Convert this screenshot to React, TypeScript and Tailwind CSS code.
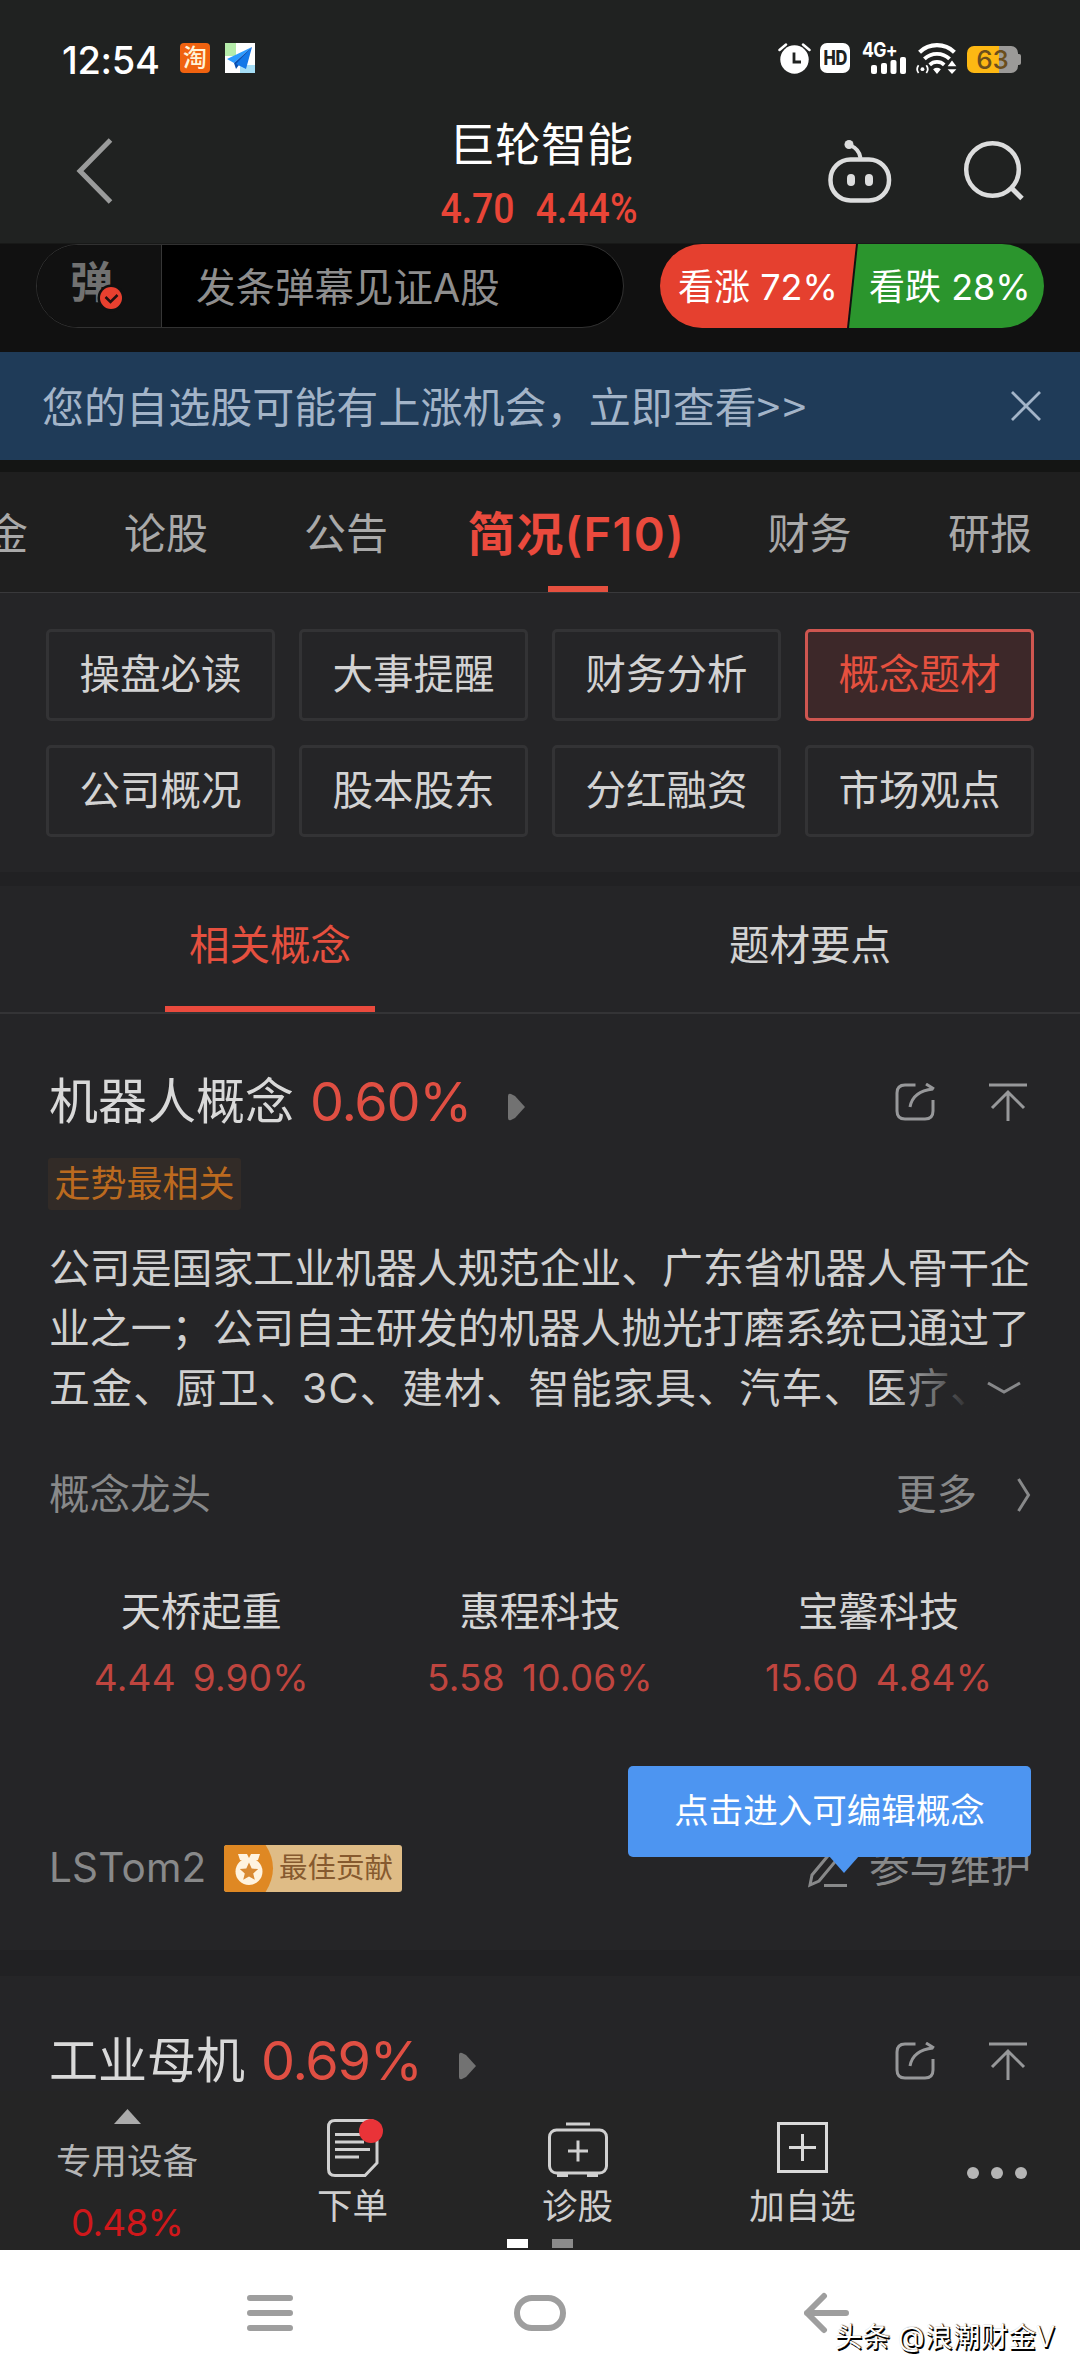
import { ReactNode } from "react";

type Tab = { label: string; width: string; active?: boolean };

const tabs: Tab[] = [
  { label: "论股", width: "w-[180px]" },
  { label: "公告", width: "w-[180px]" },
  { label: "简况(F10)", width: "w-[281px]", active: true },
  { label: "财务", width: "w-[185px]" },
  { label: "研报", width: "w-[176px]" },
];

const sections = [
  "操盘必读",
  "大事提醒",
  "财务分析",
  "概念题材",
  "公司概况",
  "股本股东",
  "分红融资",
  "市场观点",
];

const leaders = [
  { name: "天桥起重", price: "4.44", change: "9.90%" },
  { name: "惠程科技", price: "5.58", change: "10.06%" },
  { name: "宝馨科技", price: "15.60", change: "4.84%" },
];

const StatusBar = () => (
  <div className="flex h-[116px] items-center pl-[62px] pr-[59px]">
    <span className="mt-[4px] w-[118px] text-[38px] leading-[44px] font-medium tracking-[-0.3px] text-white">
      12:54
    </span>
    <span className="flex h-[30px] w-[30px] items-center justify-center rounded-[4px] bg-[#f0620f] text-[24px] font-medium text-[#fff3d8]">
      淘
    </span>
    <svg className="ml-[15px]" width="30" height="30" viewBox="0 0 30 30">
      <rect width="30" height="30" fill="#fff" />
      <rect width="11" height="13" fill="#b5ecaa" />
      <rect x="15" y="22" width="15" height="8" fill="#a5def6" />
      <path d="M27 4 2 16l7 4z" fill="#2c9bff" />
      <path d="M27 4 9 20l2 6z" fill="#0b4fb0" />
      <path d="M27 4 11 21l10 5z" fill="#1478e8" />
    </svg>
    <svg className="ml-auto" width="33" height="31" viewBox="0 0 33 31">
      <circle cx="16.5" cy="16.500" r="14.200" fill="#fff" />
      <path d="M1.500 7 8 1.500M31.500 7 25 1.500" stroke="#fff" strokeWidth="2.500" strokeLinecap="round" />
      <path d="M16 9.500v9.500h7" fill="none" stroke="#202221" strokeWidth="2.800" />
    </svg>
    <span className="ml-[9px] flex h-[30px] w-[30px] items-center justify-center rounded-[7px] bg-white text-[#202221]">
      <span className="scale-x-[0.820] text-[20px] leading-[30px] font-extrabold tracking-[-0.500px]">HD</span>
    </span>
    <div className="relative ml-[12px] h-[31px] w-[46px]">
      <span className="absolute left-0 top-0 scale-x-[0.880] origin-left text-[20px] leading-[15px] font-bold tracking-[-0.800px] text-white">
        4G+
      </span>
      <svg width="46" height="31" viewBox="0 0 46 31" fill="#fff">
        <rect x="9" y="22" width="6" height="9" rx="2" />
        <rect x="19" y="20" width="6" height="11" rx="2" />
        <rect x="28.500" y="17" width="6" height="14" rx="2" />
        <rect x="38" y="14" width="6" height="17" rx="2" />
      </svg>
    </div>
    <svg className="ml-[7px]" width="43" height="31" viewBox="0 0 43 32" fill="none" stroke="#fff">
      <path d="M4 9.500a26 26 0 0 1 36 0" strokeWidth="4.400" />
      <path d="M9 16.500a18.500 18.500 0 0 1 26 0" strokeWidth="4" />
      <path d="M14.500 22.500a11 11 0 0 1 15 0" strokeWidth="3.800" />
      <path d="m22 32-4-5q4-3 8 0zM33 24l4.500-6 4.500 6zM33 27h9l-4.500 5z" fill="#fff" stroke="none" />
      <circle cx="7" cy="27" r="2" fill="#fff" stroke="none" />
      <path d="M3 23q-3 4 0 8M11 23q3 4 0 8" strokeWidth="1.800" />
    </svg>
    <div className="ml-[9px] flex items-center pt-[3px]">
      <span className="flex h-[27px] w-[51px] items-center justify-center rounded-[7px] bg-linear-to-r from-[#fdb813] from-62% to-[#9b9a98] to-62% text-[26px] leading-[27px] font-medium text-[#6b4e1c]">
        63
      </span>
      <span className="h-[11px] w-[3px] rounded-r-[2px] bg-[#9b9a98]" />
    </div>
  </div>
);

const Header = () => (
  <div className="relative flex h-[127px] justify-center">
    <svg className="absolute left-[74px] top-[20px]" width="42" height="70" viewBox="0 0 42 70">
      <path d="M36.500 4 6 35l30.500 31" fill="none" stroke="#9a9b9b" strokeWidth="5" />
    </svg>
    <div className="ml-[2px] flex flex-col items-center">
      <h1 className="mt-[2px] text-[46px] leading-[52px] text-white">巨轮智能</h1>
      <p className="mt-[15px] ml-[-4px] flex origin-center scale-x-[0.880] gap-[24px] text-[42.500px] leading-[48px] font-medium text-[#e94537] font-['Roboto']">
        <span>4.70</span>
        <span>4.44%</span>
      </p>
    </div>
    <div className="absolute right-[54px] top-[18px] flex gap-[67px]">
      <svg width="70" height="74" viewBox="0 0 70 74" fill="none" stroke="#dcdddd" strokeWidth="4.500">
        <rect x="5.500" y="25.500" width="58.500" height="41" rx="20" />
        <path d="M35.500 24q-1-9-11-13" strokeWidth="4" />
        <circle cx="24" cy="10.500" r="4.500" fill="#dcdddd" stroke="none" />
        <path d="M26 44v4M44 44v4" strokeWidth="8" strokeLinecap="round" />
      </svg>
      <svg width="64" height="74" viewBox="0 0 64 74" fill="none" stroke="#dcdddd" strokeWidth="4.500">
        <circle cx="30.500" cy="35.500" r="26.300" />
        <path d="m50 54.500 10 10" strokeWidth="5" />
      </svg>
    </div>
  </div>
);

const BarrageBar = () => (
  <div className="flex h-[109px] items-start border-t border-[#181918] bg-[#111] pl-[36px] pr-[36px]">
    <div className="flex h-[84px] w-[588px] overflow-hidden rounded-full border border-[#313131] bg-black">
      <div className="relative w-[125px] border-r border-[#363636] bg-[#111]">
        <span className="absolute left-[33px] top-[14px] text-[43px] leading-[46px] font-bold text-[#717171]">
          弹
        </span>
        <svg className="absolute left-[60px] top-[39px]" width="28" height="28" viewBox="0 0 28 28">
          <circle cx="14" cy="14" r="13.500" fill="#111" />
          <circle cx="14" cy="14" r="11" fill="#e8402f" />
          <path d="m8.500 13 5 5 7-7" fill="none" stroke="#231010" strokeWidth="2.500" />
        </svg>
      </div>
      <span className="pl-[34px] text-[39.500px] leading-[86px] text-[#8e8e8e]">发条弹幕见证A股</span>
    </div>
    <div className="relative ml-auto flex h-[84px] w-[384px] overflow-hidden rounded-full text-[36px] leading-[86px] text-white">
      <svg className="absolute inset-0" width="384" height="84" viewBox="0 0 384 84">
        <path d="M0 0h196l-9 84H0z" fill="#e5402f" />
        <path d="M198 0h186v84H189z" fill="#2b952d" />
      </svg>
      <span className="relative w-[192px] pl-[18px]">看涨 72%</span>
      <span className="relative pl-[17px]">看跌 28%</span>
    </div>
  </div>
);

const PlayMark = () => (
  <svg width="18" height="28" viewBox="0 0 18 28">
    <path d="M0 3q0-3 3-2l4 2 10 11L7 25l-4 2q-3 1-3-2z" fill="#727272" />
  </svg>
);

const CardTools = () => (
  <div className="ml-auto flex gap-[54px] pr-[4px]">
    <svg width="40" height="39" viewBox="0 0 40 39" fill="none" stroke="#97989a" strokeWidth="3">
      <path d="M20.500 2H10q-8 0-8 8v18q0 8 8 8h20q8 0 8-8V17" />
      <path d="M15 24Q18 8 38 6M31 1l8 5" />
    </svg>
    <svg width="38" height="39" viewBox="0 0 38 39" fill="none" stroke="#97989a" strokeWidth="3">
      <path d="M0 2h38M19 38V9M3 25 19 9l16 16" />
    </svg>
  </div>
);

const CardTitle = ({ name, change }: { name: string; change: string }) => (
  <div className="flex h-[60px] items-center">
    <h2 className="text-[49px] leading-[60px] text-[#d9d9d9]">{name}</h2>
    <span className="ml-[16px] mr-[40px] w-[158px] text-[54px] leading-[60px] tracking-[-1.300px] text-[#e04f43]">
      {change}
    </span>
    <div className="mt-[9px]">
      <PlayMark />
    </div>
    <CardTools />
  </div>
);

const ToolItem = ({ label, children }: { label: string; children: ReactNode }) => (
  <div className="flex w-[225px] flex-col items-center">
    <div className="flex h-[68px] items-end">{children}</div>
    <span className="mt-[10px] text-[35.500px] leading-[40px] text-[#cfcfcf]">{label}</span>
  </div>
);

const BottomBar = () => (
  <div className="relative flex h-[159px] shrink-0 bg-[#252525] pt-[18px]">
    <div className="flex w-[254px] flex-col items-center">
      <svg width="27" height="15" viewBox="0 0 27 15">
        <path d="M13.500 0 27 15H0z" fill="#ababab" />
      </svg>
      <span className="mt-[18px] text-[35.500px] leading-[40px] text-[#b5b5b5]">专用设备</span>
      <span className="mt-[21px] text-[37px] leading-[40px] tracking-[-0.800px] text-[#d0181b]">0.48%</span>
    </div>
    <div className="-ml-[14px] flex">
      <ToolItem label="下单">
        <svg className="ml-[6px]" width="58" height="58" viewBox="0 0 58 58" fill="none" stroke="#d0d0d0" strokeWidth="3">
          <path d="M8 1.500h34q8 0 8 8V44L38 56.500H8q-6.500 0-6.500-6.500V8q0-6.500 6.500-6.500z" />
          <path d="M8 15.500h25M8 23h29M8 30.500h35M8 38h24" />
          <circle cx="44" cy="12" r="12" fill="#e93338" stroke="none" />
        </svg>
      </ToolItem>
      <ToolItem label="诊股">
        <svg width="60" height="55" viewBox="0 0 60 55" fill="none" stroke="#d0d0d0" strokeWidth="3">
          <rect x="1.500" y="8" width="57" height="43" rx="7" />
          <path d="M18 2h24M30 18.500v21M20 29h20" />
          <path d="M9 53h11M39 53h11" strokeWidth="4" />
        </svg>
      </ToolItem>
      <ToolItem label="加自选">
        <svg className="mb-[4px]" width="51" height="51" viewBox="0 0 51 51" fill="none" stroke="#dadada" strokeWidth="3">
          <rect x="1.500" y="1.500" width="48" height="48" />
          <path d="M25.500 12v27M12 25.500h27" />
        </svg>
      </ToolItem>
    </div>
    <div className="ml-[52px] flex gap-[12px] pt-[58px]">
      <span className="size-[12px] rounded-full bg-[#b5b5b5]" />
      <span className="size-[12px] rounded-full bg-[#b5b5b5]" />
      <span className="size-[12px] rounded-full bg-[#b5b5b5]" />
    </div>
    <div className="absolute bottom-[2px] left-[507px] flex gap-[24px]">
      <span className="h-[9px] w-[21px] bg-white" />
      <span className="h-[9px] w-[21px] bg-[#8b8b8b]" />
    </div>
  </div>
);

const SystemNav = () => (
  <div className="relative flex h-[126px] shrink-0 bg-white pl-[247px] pt-[40px]">
    <svg width="46" height="46" viewBox="0 0 46 46" stroke="#9e9e9e" strokeWidth="6" strokeLinecap="round">
      <path d="M3 8h40M3 23h40M3 38h40" />
    </svg>
    <svg className="ml-[221px]" width="52" height="46" viewBox="0 0 52 46" fill="none" stroke="#9e9e9e" strokeWidth="6">
      <rect x="3" y="8" width="46" height="30" rx="15" />
    </svg>
    <svg className="ml-[238px]" width="46" height="46" viewBox="0 0 46 46" fill="none" stroke="#9e9e9e" strokeWidth="6" strokeLinecap="round" strokeLinejoin="round">
      <path d="M42 23H3M20 6 3 23l17 17" />
    </svg>
    <span className="absolute right-[25px] top-[67px] whitespace-nowrap text-[27.800px] leading-[40px] text-white [text-shadow:1.5px_1.5px_0_#000,1px_0_1px_#000]">
      头条 @浪潮财金V
    </span>
  </div>
);

const App = () => {
  return (
    <div className="flex h-[2376px] w-[1080px] flex-col overflow-hidden bg-[#252527] font-['Inter','Noto_Sans_CJK_SC',sans-serif]">
      <div className="bg-[#202221]">
        <StatusBar />
        <Header />
      </div>
      <BarrageBar />
      <div className="flex h-[108px] items-center bg-[#1f3b58] pl-[42px] pr-[39px] text-[#a3b4c8]">
        <p className="text-[42px] leading-[60px] tracking-[0.050px]">
          您的自选股可能有上涨机会，立即查看
          <span className="font-['Noto_Sans_CJK_SC'] tracking-[2.500px]">&gt;&gt;</span>
        </p>
        <svg className="ml-auto" width="30" height="30" viewBox="0 0 30 30">
          <path d="m1 1 28 28M29 1 1 29" stroke="#a3b4c8" strokeWidth="2.800" />
        </svg>
      </div>
      <div className="h-[12px] bg-[#141514]" />
      <nav className="flex h-[121px] border-b border-[#39393b] bg-[#1f1f1f] text-[42px] leading-[124px] text-[#a9a9a9]">
        <span className="-ml-[14px] w-[90px]">金</span>
        {tabs.map((tab) => (
          <div key={tab.label} className={`${tab.width} relative text-center`}>
            {tab.active ? (
              <>
                <span className="text-[47px] font-semibold tracking-[1.400px] text-[#ea4a3d]">{tab.label}</span>
                <span className="absolute bottom-0 left-[112px] h-[6px] w-[60px] bg-[#e5503f]" />
              </>
            ) : (
              tab.label
            )}
          </div>
        ))}
      </nav>

      <div className="grid grid-cols-4 gap-x-[24px] gap-y-[24px] px-[46px] pb-[35px] pt-[36px]">
        {sections.map((name) => (
          <button
            key={name}
            className={`h-[92px] rounded-[5px] border-3 text-[40.500px] leading-[60px] ${
              name === "概念题材"
                ? "border-[#cf5650] bg-[#3d2829] text-[#e5503f]"
                : "border-[#333335] text-[#d3d3d3]"
            }`}
          >
            {name}
          </button>
        ))}
      </div>
      <div className="h-[14px] bg-[#212123]" />
      <div className="grid h-[128px] grid-cols-2 border-b-2 border-[#343436] text-center text-[40.500px] leading-[120px]">
        <div className="relative text-[#e5503f]">
          相关概念
          <span className="absolute bottom-0 left-[165px] h-[6px] w-[210px] bg-[#ea4a3d]" />
        </div>
        <div className="text-[#d3d3d3]">题材要点</div>
      </div>

      <section className="h-[936px] shrink-0 px-[49px] pt-[58px]">
        <CardTitle name="机器人概念" change="0.60%" />
        <span className="mt-[26px] -ml-px block h-[52px] w-[193px] rounded-[3px] bg-[#322b27] text-center text-[36px] leading-[53px] text-[#bb6a1f]">
          走势最相关
        </span>
        <div className="relative mt-[28px] whitespace-nowrap text-[40.880px] leading-[60px] text-[#d0d0d0]">
          <p>公司是国家工业机器人规范企业、广东省机器人骨干企</p>
          <p>业之一；公司自主研发的机器人抛光打磨系统已通过了</p>
          <p className="tracking-[1.300px]">五金、厨卫、3C、建材、智能家具、汽车、医疗、</p>
          <div className="absolute bottom-0 right-0 flex h-[60px] w-[145px] items-center justify-end bg-linear-to-r from-transparent to-[#252527] to-60% pr-[10px]">
            <svg width="34" height="14" viewBox="0 0 34 14">
              <path d="m1 2 16 9 16-9" fill="none" stroke="#87888a" strokeWidth="3" />
            </svg>
          </div>
        </div>
        <div className="mt-[47px] flex h-[60px] items-center text-[40.500px] text-[#88898a]">
          <span>概念龙头</span>
          <span className="ml-auto">更多</span>
          <svg className="ml-[40px]" width="14" height="34" viewBox="0 0 14 34">
            <path d="m1.500 1 10 16-10 16" fill="none" stroke="#88898a" strokeWidth="3" />
          </svg>
        </div>
        <div className="-mx-[17px] mt-[57px] grid grid-cols-3 text-center">
          {leaders.map((stock) => (
            <div key={stock.name}>
              <p className="text-[40.300px] leading-[60px] text-[#d5d5d5]">{stock.name}</p>
              <p className="mt-[11px] text-[37px] leading-[50px] tracking-[0.200px] text-[#bf453f]">
                {stock.price}
                <span className="ml-[17px]">{stock.change}</span>
              </p>
            </div>
          ))}
        </div>
        <div className="relative mt-[135px] flex h-[60px] items-center text-[#88898a]">
          <span className="w-[175px] text-[40.500px] tracking-[0.200px]">LSTom2</span>
          <div className="flex h-[47px] w-[178px] items-center overflow-hidden rounded-[3px] bg-[#dfbc86]">
            <svg width="50" height="47" viewBox="0 1 50 47">
              <path d="M0 0h41q16 24 0 49H0z" fill="#df8823" />
              <path d="M14 10h9l2 4 2-4h9l-2 6H16z" fill="#fff3df" />
              <circle cx="25" cy="27.500" r="13.500" fill="#fff3df" />
              <path d="m25 18.500 2.700 6 6.500.6-5 4.300 1.600 6.400-5.800-3.400-5.800 3.400 1.600-6.400-5-4.300 6.500-.6z" fill="#d98a33" />
            </svg>
            <span className="ml-[5px] text-[28.500px] text-[#865a2f]">最佳贡献</span>
          </div>
          <svg className="ml-auto" width="42" height="40" viewBox="0 0 42 40" fill="none" stroke="#88898a" strokeWidth="3">
            <path d="M3 37 5 27 25 3l7 6L12 33zM17 37.500h23" />
          </svg>
          <span className="ml-[20px] text-[40.500px]">参与维护</span>
          <div className="absolute -top-[72px] right-0 h-[91px] w-[403px] rounded-[5px] bg-[#4d95f1] text-center text-[34.500px] leading-[89px] text-white">
            点击进入可编辑概念
            <svg className="absolute left-[201px] top-[90px]" width="30" height="17" viewBox="0 0 30 17">
              <path d="M0 0h30L15 17z" fill="#4d95f1" />
            </svg>
          </div>
        </div>
      </section>
      <div className="h-[26px] shrink-0 bg-[#212123]" />
      <section className="h-[115px] shrink-0 px-[49px] pt-[55px]">
        <CardTitle name="工业母机" change="0.69%" />
      </section>
      <BottomBar />
      <SystemNav />
    </div>
  );
};

export default App;
